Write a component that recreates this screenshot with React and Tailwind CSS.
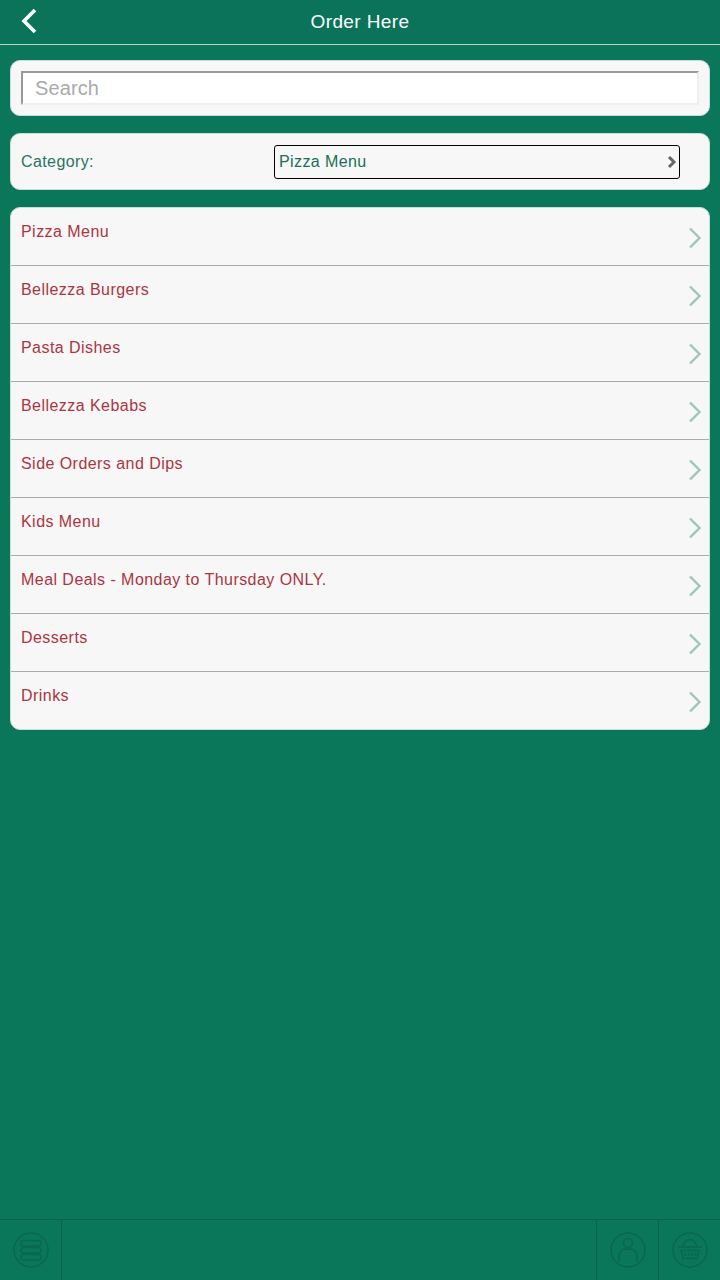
import React from 'react'

const ITEMS = [
  'Pizza Menu',
  'Bellezza Burgers',
  'Pasta Dishes',
  'Bellezza Kebabs',
  'Side Orders and Dips',
  'Kids Menu',
  'Meal Deals - Monday to Thursday ONLY.',
  'Desserts',
  'Drinks',
]

function ItemChevron() {
  return (
    <svg width="14" height="22" viewBox="0 0 14 22" fill="none" className="absolute right-[7px] top-[19px]" aria-hidden>
      <path d="M2 1.5 11.5 11 2 20.5" stroke="#9cc7b7" strokeWidth="2.4" />
    </svg>
  )
}

function MenuIcon() {
  return (
    <svg width="36" height="36" viewBox="0 0 36 36" fill="none" stroke="#0b674e" strokeWidth="1.5" aria-hidden>
      <circle cx="18" cy="18" r="17" />
      <rect x="8" y="8.5" width="20" height="5.5" rx="2.5" />
      <rect x="8" y="15.5" width="20" height="5.5" rx="2.5" />
      <rect x="8" y="22.5" width="20" height="5.5" rx="2.5" />
    </svg>
  )
}

function UserIcon() {
  return (
    <svg width="36" height="36" viewBox="0 0 36 36" fill="none" stroke="#0b674e" strokeWidth="1.5" aria-hidden>
      <circle cx="18" cy="18" r="17" />
      <circle cx="18" cy="11" r="4.5" />
      <path d="M9 29v-5c0-4 3-7 6-7h6c3 0 6 3 6 7v5" />
    </svg>
  )
}

function BasketIcon() {
  return (
    <svg width="36" height="36" viewBox="0 0 36 36" fill="none" stroke="#0b674e" strokeWidth="1.5" aria-hidden>
      <circle cx="18" cy="18" r="17" />
      <path d="M11 15c1-5 4-7.500 7-7.500s6 2.500 7 7.500" />
      <path d="M6 15h24M8 18.500h20M9 18.500l2 8h14l2-8" />
      <path d="M13 21v3M16.500 21v3M20 21v3M23.500 21v3" />
    </svg>
  )
}

export default function App() {
  return (
    <div className="w-[720px] h-[1280px] flex flex-col bg-[#0a775b] font-['Liberation_Sans',sans-serif] tracking-[0.4px]">
      {/* header */}
      <header className="h-[45px] shrink-0 border-b border-[#b5d6cb] bg-[#0a735a] flex items-center justify-center relative">
        <svg width="18" height="26" viewBox="0 0 18 26" fill="none" className="absolute left-[20px] top-[8px]" aria-hidden>
          <path d="M15 2 4 13l11 11" stroke="#fff" strokeWidth="3.6" />
        </svg>
        <span className="text-white text-[19px] leading-none -mt-[2px]">Order Here</span>
      </header>

      <main className="flex-1 flex flex-col px-[10px] pt-[15px]">
        {/* search */}
        <div className="h-[56px] rounded-[10px] bg-[#f7f7f8] border border-[#c9ddd6] px-[10px] pt-[10px]">
          <div className="h-[34px] bg-white border-2 border-t-[#999] border-l-[#999] border-r-[#eee] border-b-[#eee] pl-[12px] flex items-center text-[20px] tracking-[0.1px] text-[#aaa]">
            Search
          </div>
        </div>

        {/* category */}
        <div className="h-[57px] mt-[17px] rounded-[10px] bg-[#f7f7f8] border border-[#c9ddd6] pl-[10px] flex items-center">
          <span className="w-[253px] text-[16px] text-[#2a7460]">Category:</span>
          <div className="w-[406px] h-[34px] border border-black rounded-[3px] pl-[4px] pr-[1px] pt-[1px] flex items-center justify-between text-[16px] text-[#1a6f58]">
            Pizza Menu
            <svg width="12" height="14" viewBox="0 0 12 14" fill="none" aria-hidden>
              <path d="M3 2l5 5-5 5" stroke="#666" strokeWidth="3" />
            </svg>
          </div>
        </div>

        {/* list */}
        <div className="mt-[17px] rounded-[10px] bg-[#f7f7f8] border border-[#c9ddd6] overflow-hidden">
          {ITEMS.map((item, i) => (
            <div key={item} className={`relative pl-[10px] pt-[14px] text-[16px] leading-[19px] tracking-[0.45px] text-[#ab3540] ${i > 0 ? 'h-[58px] border-t border-[#aaa]' : 'h-[57px]'}`}>
              {item}
              <ItemChevron />
            </div>
          ))}
        </div>
      </main>

      {/* bottom bar */}
      <footer className="h-[61px] shrink-0 border-t border-[#0b6249] flex justify-between">
        <div className="w-[62px] border-r border-[#0b6249] flex items-center justify-center"><MenuIcon /></div>
        <div className="flex">
          <div className="w-[62px] border-l border-[#0b6249] flex items-center justify-center"><UserIcon /></div>
          <div className="w-[62px] border-l border-[#0b6249] flex items-center justify-center"><BasketIcon /></div>
        </div>
      </footer>
    </div>
  )
}
